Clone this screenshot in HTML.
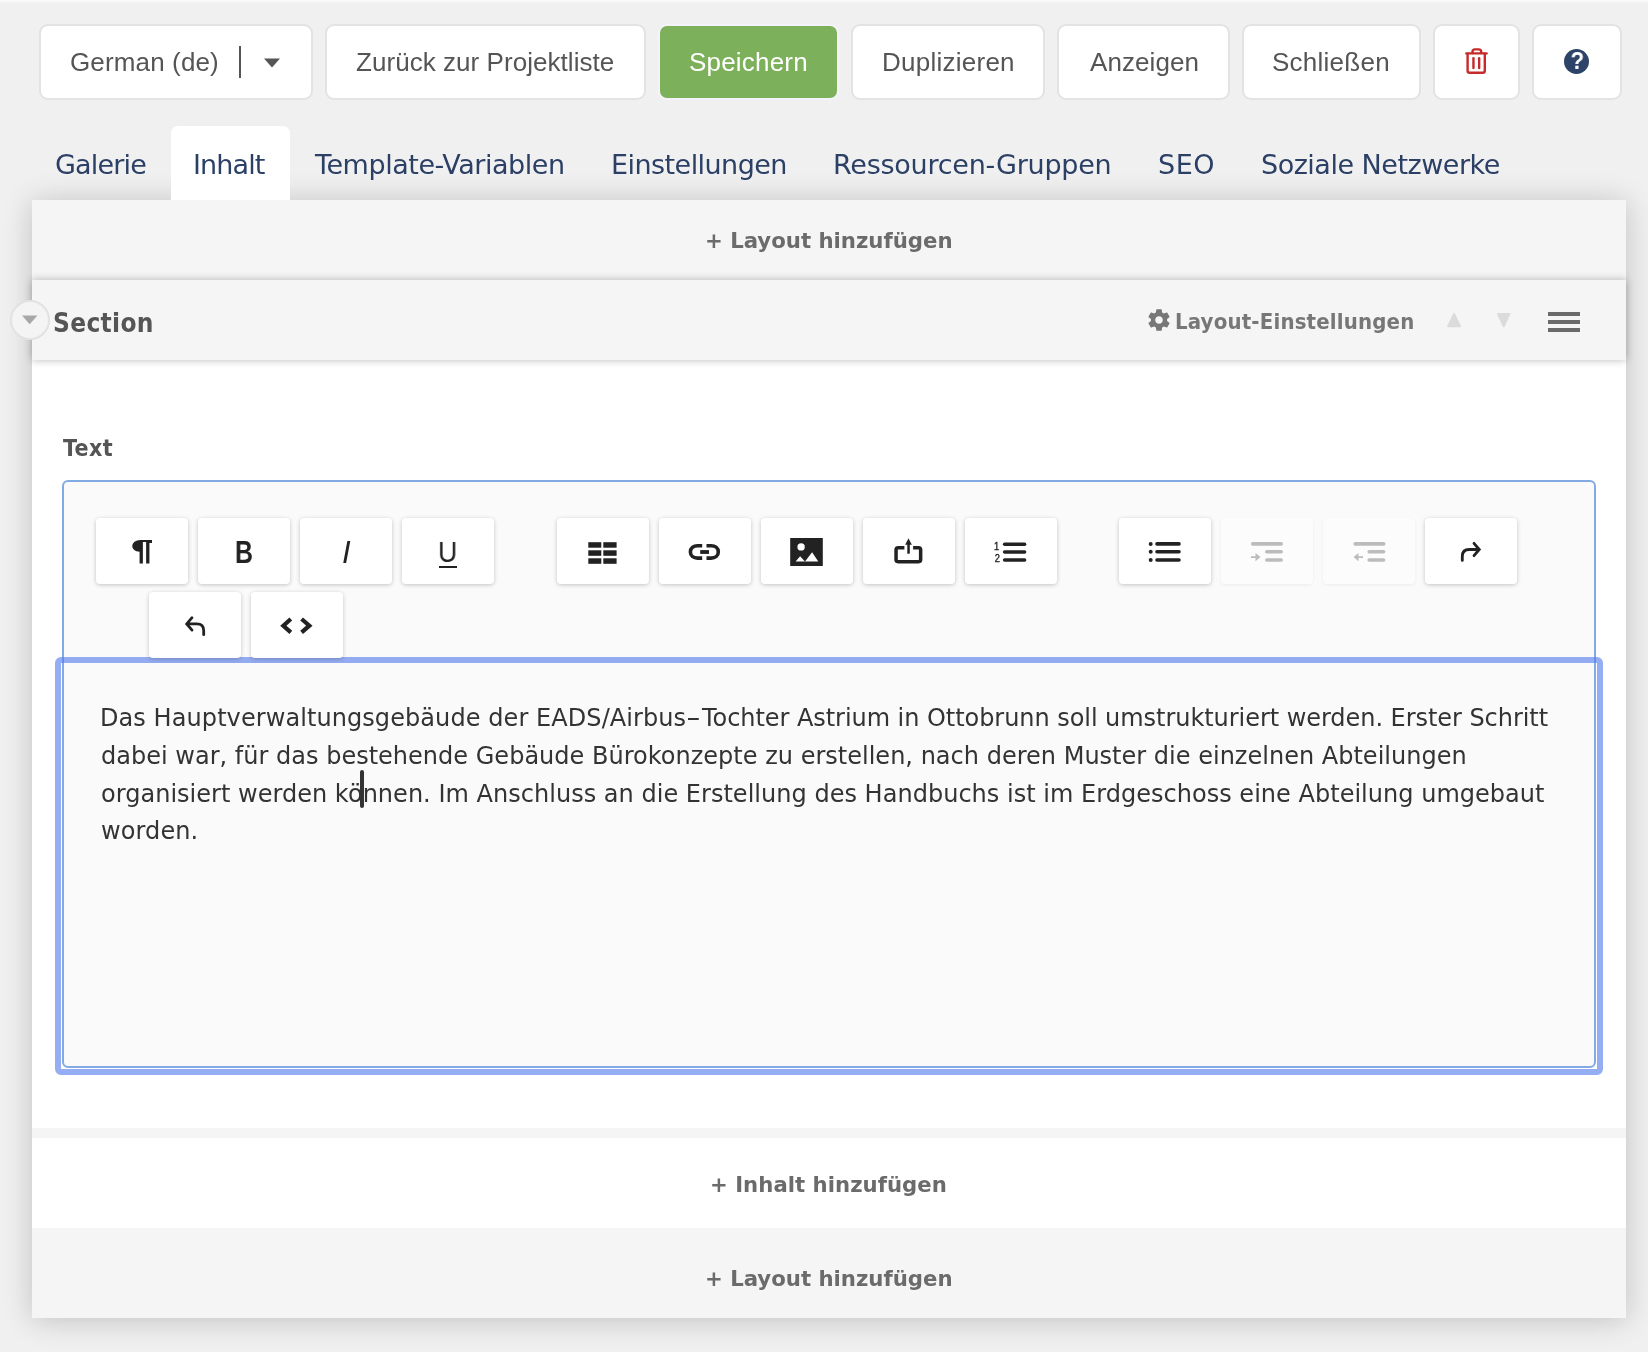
<!DOCTYPE html>
<html lang="de">
<head>
<meta charset="utf-8">
<title>Projekt bearbeiten</title>
<style>
*{box-sizing:border-box;margin:0;padding:0}
html,body{width:1648px;height:1352px;overflow:hidden}
body{background:#f0f0f0;font-family:"Liberation Sans",sans-serif;position:relative;color:#555}
.abs{position:absolute}
.t{position:absolute;white-space:nowrap;line-height:1;will-change:transform}
/* top strip */
#strip{left:0;top:0;width:1648px;height:3px;background:linear-gradient(#fafafa,#f8f8f8 50%,#f0f0f0)}
/* top buttons */
.btn{position:absolute;top:24px;height:76px;background:#fff;border:2px solid #e3e3e3;border-radius:9px}
.btn .t{color:#555;font-size:26px;top:23px}
#b-save{background:#7db05a;border-color:#f5f3f9}
#b-save .t{color:#fff}
/* tabs */
.tab{color:#2c4066;font-size:27px;top:151px;font-family:"DejaVu Sans","Liberation Sans",sans-serif}
#tab-active{left:171px;top:126px;width:119px;height:74px;background:#fff;border-radius:7px 7px 0 0}
/* panel */
#panel{left:32px;top:200px;width:1594px;height:1118px;background:#f5f5f5;box-shadow:0 2px 28px rgba(0,0,0,.2)}
.add{color:#6b6b6b;font-weight:bold;font-size:22px;font-family:"DejaVu Sans Condensed","DejaVu Sans","Liberation Sans",sans-serif}
#sechead{left:32px;top:280px;width:1594px;height:80px;background:#f5f5f5;box-shadow:0 0 8px rgba(0,0,0,.28)}
#white1{left:32px;top:360px;width:1594px;height:768px;background:#fff}
#white2{left:32px;top:1138px;width:1594px;height:90px;background:#fff}
#circle{left:10px;top:300px;width:40px;height:40px;border-radius:50%;background:#f4f4f4;border:2px solid #e2e2e2}
/* editor */
#editor{left:62px;top:480px;width:1534px;height:588px;border:2px solid #82abe6;border-radius:6px;background:#fafafa}
#ring{left:55px;top:657px;width:1548px;height:418px;border:6px solid rgba(84,123,236,.62);border-radius:6px}
.tb{position:absolute;width:92px;height:66px;background:#fff;border-radius:4px;box-shadow:0 1px 4px rgba(0,0,0,.22)}
.tb.dis{background:#fcfcfc;box-shadow:0 1px 3px rgba(0,0,0,.06)}
.tb svg{position:absolute;left:0;top:0}
.gl{color:#222}
.bc{font-weight:bold;font-family:"DejaVu Sans Condensed","DejaVu Sans","Liberation Sans",sans-serif}
.body{color:#333;font-size:24px;font-family:"DejaVu Sans","Liberation Sans",sans-serif}
</style>
</head>
<body>
<div id="strip" class="abs"></div>

<!-- TOPBAR -->
<div class="btn" id="b-lang" style="left:39px;width:274px"><span class="t" style="left:29.2px;letter-spacing:0.14px">German (de)</span>
<div class="abs" style="left:198px;top:20px;width:2px;height:32px;background:#555"></div>
<svg class="abs" style="left:222px;top:32.4px" width="18" height="10" viewBox="0 0 18 10"><path d="M1 0.5h16L9 9.5z" fill="#555"/></svg></div>
<div class="btn" id="b-back" style="left:325px;width:321px"><span class="t" style="left:28.9px;letter-spacing:0.051px">Zurück zur Projektliste</span></div>
<div class="btn" id="b-save" style="left:658px;width:181px"><span class="t" style="left:29.0px;letter-spacing:0.2px">Speichern</span></div>
<div class="btn" id="b-dup" style="left:851px;width:194px"><span class="t" style="left:29.0px;letter-spacing:0.25px">Duplizieren</span></div>
<div class="btn" id="b-show" style="left:1057px;width:173px"><span class="t" style="left:30.5px;letter-spacing:0.071px">Anzeigen</span></div>
<div class="btn" id="b-close" style="left:1242px;width:179px"><span class="t" style="left:28.0px;letter-spacing:0.25px">Schließen</span></div>
<div class="btn" id="b-trash" style="left:1433px;width:87px"><svg class="abs" style="left:1px;top:1px" width="81" height="70" viewBox="0 0 81 70"><g fill="none" stroke="#c62a2a" stroke-width="2.4" stroke-linecap="round" stroke-linejoin="round"><path d="M30.4 26.4h20.2"/><path d="M36.5 26v-1.200q0-2.400 2.400-2.400h3.900q2.400 0 2.400 2.400v1.200"/><path d="M31.600 27v16.800q0 2 2 2h13.200q2 0 2-2v-16.800"/><path d="M37.450 31.200v9.800"/><path d="M43.150 31.200v9.800"/></g></svg></div>
<div class="btn" id="b-help" style="left:1532px;width:90px"><div class="abs" style="left:30px;top:23px;width:25px;height:25px;border-radius:50%;background:#2d4468"></div><span class="t" style="left:35.5px;top:22.5px;font-size:24px;font-weight:bold;color:#fff;transform:scaleX(.92);transform-origin:50% 50%">?</span></div>

<!-- PANEL -->
<div id="panel" class="abs"></div>
<div id="tab-active" class="abs"></div>
<!-- TABS -->
<span class="t tab" style="left:55.1px;letter-spacing:-0.816px">Galerie</span>
<span class="t tab" style="left:193.4px;letter-spacing:-0.88px">Inhalt</span>
<span class="t tab" style="left:315.4px;letter-spacing:-0.453px">Template-Variablen</span>
<span class="t tab" style="left:611.2px;letter-spacing:-0.55px">Einstellungen</span>
<span class="t tab" style="left:832.9px;letter-spacing:-0.248px">Ressourcen-Gruppen</span>
<span class="t tab" style="left:1157.6px;letter-spacing:0.55px">SEO</span>
<span class="t tab" style="left:1260.9px;letter-spacing:-0.494px">Soziale Netzwerke</span>
<div id="white1" class="abs"></div>
<div id="white2" class="abs"></div>
<div id="sechead" class="abs"></div>
<span class="t add" style="left:704.6px;top:229.6px;letter-spacing:-0.011px;transform:scaleX(1.074);transform-origin:0 0">+ Layout hinzufügen</span>
<span class="t add" style="left:709.5px;top:1173.5px;letter-spacing:0.028px;transform:scaleX(1.0714);transform-origin:0 0">+ Inhalt hinzufügen</span>
<span class="t add" style="left:704.6px;top:1267.8px;letter-spacing:-0.011px;transform:scaleX(1.074);transform-origin:0 0">+ Layout hinzufügen</span>

<div id="circle" class="abs"></div>
<svg class="abs" style="left:10px;top:300px" width="40" height="40"><path d="M12 15.400h15.400l-7.700 8.800z" fill="#a8a8a8"/></svg>
<svg class="abs" id="gear" style="left:1145.6px;top:306.8px" width="26" height="26" viewBox="0 0 24 24"><path fill="#777" d="M19.430 12.980c.040-.320.070-.640.070-.980s-.030-.660-.070-.980l2.110-1.650c.190-.150.240-.420.120-.640l-2-3.460c-.120-.220-.390-.300-.610-.220l-2.490 1c-.520-.400-1.080-.730-1.690-.980l-.380-2.650A.488.488 0 0 0 14 2h-4c-.250 0-.460.180-.490.420l-.380 2.650c-.610.250-1.170.590-1.690.980l-2.490-1c-.230-.090-.490 0-.610.220l-2 3.460c-.130.220-.070.490.120.640l2.110 1.650c-.040.320-.070.650-.070.980s.030.660.070.980l-2.110 1.650c-.190.150-.240.420-.120.640l2 3.460c.120.220.390.300.610.220l2.490-1c.520.400 1.080.730 1.690.980l.380 2.650c.030.240.240.420.490.420h4c.250 0 .460-.180.490-.420l.380-2.650c.610-.250 1.170-.590 1.690-.980l2.490 1c.230.090.490 0 .610-.220l2-3.460c.120-.220.070-.490-.120-.640l-2.110-1.650zM12 15.500c-1.930 0-3.500-1.570-3.500-3.500s1.570-3.500 3.500-3.500 3.500 1.570 3.500 3.500-1.570 3.500-3.500 3.500z"/></svg>
<svg class="abs" style="left:1440px;top:306px" width="150" height="30"><g fill="#dbdbdb" stroke="#dbdbdb" stroke-width="2" stroke-linejoin="round"><path d="M14.1 7.9L20 20.3H8.2Z"/><path d="M57.9 7.9H69.4L63.65 20.3Z"/></g><g fill="#6a6a6a"><rect x="108" y="6" width="32" height="4"/><rect x="108" y="14" width="32" height="4"/><rect x="108" y="22" width="32" height="4"/></g></svg>
<span class="t bc" id="sectitle" style="left:52.9px;top:309.6px;font-size:26px;color:#555;letter-spacing:0.333px">Section</span>
<span class="t bc" id="layset" style="left:1174.8px;top:310.6px;font-size:22px;color:#777;letter-spacing:0.168px">Layout-Einstellungen</span>

<span class="t bc" id="lbl-text" style="left:63.0px;top:437px;font-size:23px;color:#555;letter-spacing:0.467px">Text</span>

<!-- EDITOR -->
<div id="editor" class="abs"></div>
<div id="ring" class="abs"></div>

<!-- TOOLBAR -->
<div class="tb" style="left:96px;top:518px"><span class="t gl" style="left:34.3px;top:19.0px;font-size:29.0px;font-weight:bold;font-family:'DejaVu Sans','Liberation Sans',sans-serif;transform:scaleX(1.22);transform-origin:0 0">¶</span><div class="abs" style="left:52px;top:22px;width:4px;height:2.7px;background:#222"></div></div>
<div class="tb" style="left:198px;top:518px"><span class="t gl" style="left:36.5px;top:19.2px;font-size:31px;font-weight:bold;transform:scaleX(.8);transform-origin:0 0">B</span></div>
<div class="tb" style="left:300px;top:518px"><span class="t gl" style="left:42px;top:19.2px;font-size:31px;font-style:italic;">I</span></div>
<div class="tb" style="left:402px;top:518px"><span class="t gl" style="left:35.500px;top:19.5px;font-size:29px;transform:scaleX(.92);transform-origin:0 0">U</span><div class="abs" style="left:36.7px;top:47.9px;width:18.1px;height:2.2px;background:#222"></div></div>
<div class="tb" style="left:557px;top:518px"><svg width="92" height="66"><g fill="#222"><rect x="31.3" y="24.2" width="13" height="5.5"/><rect x="46.3" y="24.2" width="13.3" height="5.5"/><rect x="31.3" y="32.3" width="13" height="5.5"/><rect x="46.3" y="32.3" width="13.3" height="5.5"/><rect x="31.3" y="40.3" width="13" height="5.5"/><rect x="46.3" y="40.3" width="13.3" height="5.5"/></g></svg></div>
<div class="tb" style="left:659px;top:518px"><svg width="92" height="66"><g fill="none" stroke="#222" stroke-width="3.6"><path d="M43.2 27.7H38.6C34.4 27.7 31.4 30.2 31.4 33.9C31.4 37.6 34.4 40.1 38.6 40.1H43.2"/><path d="M47.5 27.7H52.1C56.3 27.7 59.3 30.2 59.3 33.9C59.3 37.6 56.3 40.1 52.1 40.1H47.5"/></g><rect x="41.2" y="32.1" width="8.8" height="3.8" fill="#222"/></svg></div>
<div class="tb" style="left:761px;top:518px"><svg width="92" height="66"><path fill-rule="evenodd" fill="#222" d="M29.200 20h32.600v28h-32.600z M36.400 28.900a3.700 3.700 0 1 0 7.400 0a3.700 3.700 0 1 0 -7.400 0z M34.600 43.500l4.500-5.300l4.900 5.300z M44 43.500l7.100-9.200l6.200 9.200z"/></svg></div>
<div class="tb" style="left:863px;top:518px"><svg width="92" height="66"><path d="M41.4 29.65h-6.25q-2.1 0-2.1 2.1v9.8q0 2.1 2.1 2.1h20.4q2.1 0 2.1-2.1v-9.8q0-2.1-2.1-2.1h-5.45" fill="none" stroke="#222" stroke-width="3.5"/><rect x="44.3" y="26" width="2.5" height="9.7" fill="#222"/><path d="M45.5 20.2l3.3 6.5h-6.6z" fill="#222"/></svg></div>
<div class="tb" style="left:965px;top:518px"><svg width="92" height="66"><g stroke="#222" stroke-width="3.500" stroke-linecap="round"><path d="M39.600 26.200h20"/><path d="M39.600 34.100h20"/><path d="M39.600 42.100h20"/></g><text x="39.8" y="31.9" text-anchor="end" transform="scale(.86 1)" font-family="Liberation Sans, sans-serif" font-size="10.8" stroke="#222" stroke-width=".35" fill="#222">1</text><text x="40.7" y="44" text-anchor="end" transform="scale(.86 1)" font-family="Liberation Sans, sans-serif" font-size="10.8" stroke="#222" stroke-width=".35" fill="#222">2</text></svg></div>
<div class="tb" style="left:1119px;top:518px"><svg width="92" height="66"><g stroke="#222" stroke-width="3.600" stroke-linecap="round"><path d="M38 25.900h22"/><path d="M38 33.800h22"/><path d="M38 42h22"/></g><g fill="#222"><circle cx="31.700" cy="25.900" r="2"/><circle cx="31.700" cy="33.800" r="2"/><circle cx="31.700" cy="42" r="2"/></g></svg></div>
<div class="tb dis" style="left:1221px;top:518px"><svg width="92" height="66"><g stroke="#bcbcbc" stroke-width="3.600" stroke-linecap="round"><path d="M31.700 25.900h28.500"/><path d="M45.800 33.800h14.400"/><path d="M45.800 42h14.400"/></g><path d="M30 38.200h4.500v-3.200l5 4.100l-5 4.100v-3.200h-4.500z" fill="#bcbcbc"/></svg></div>
<div class="tb dis" style="left:1323px;top:518px"><svg width="92" height="66"><g stroke="#bcbcbc" stroke-width="3.600" stroke-linecap="round"><path d="M32.200 25.900h28.500"/><path d="M46.200 33.800h14.400"/><path d="M46.200 42h14.400"/></g><path d="M40 38.200h-4.500v-3.200l-5 4.100l5 4.100v-3.200h4.500z" fill="#bcbcbc"/></svg></div>
<div class="tb" style="left:1425px;top:518px"><svg width="92" height="66"><path d="M37.3 42.4V38.4Q37.3 31.5 44.2 31.5H54M49 25.3L54.3 31.5L49 37.7" fill="none" stroke="#222" stroke-width="2.8" stroke-linecap="round" stroke-linejoin="miter"/></svg></div>
<div class="tb" style="left:149px;top:592px"><svg width="92" height="66"><path d="M54.7 42.7V38.7Q54.7 31.9 47.8 31.9H38M43 25.7L37.7 31.9L43 38.1" fill="none" stroke="#222" stroke-width="2.8" stroke-linecap="round" stroke-linejoin="miter"/></svg></div>
<div class="tb" style="left:251px;top:592px"><svg width="92" height="66"><path d="M39.8 27L32.35 33.7L39.8 40.4M50.6 27L58.35 33.7L50.6 40.4" fill="none" stroke="#222" stroke-width="4.2" stroke-linejoin="miter"/></svg></div>
<span class="t body" style="left:100.0px;top:705.6px;letter-spacing:0.076px">Das Hauptverwaltungsgebäude der EADS/Airbus<span style="display:inline-block;transform:scaleX(1.7);transform-origin:0 50%">-</span></span><span class="t body" style="left:701.8px;top:705.6px;letter-spacing:-0.051px">Tochter Astrium in Ottobrunn soll umstrukturiert werden. Erster Schritt</span>
<span class="t body" style="left:100.5px;top:743.6px;letter-spacing:0.011px">dabei war, für das bestehende Gebäude Bürokonzepte zu erstellen, nach deren Muster die einzelnen Abteilungen</span>
<span class="t body" style="left:100.5px;top:781.5px;letter-spacing:0.021px">organisiert werden können. Im Anschluss an die Erstellung des Handbuchs ist im Erdgeschoss eine Abteilung umgebaut</span>
<span class="t body" style="left:100.6px;top:819.4px;letter-spacing:0.1px">worden.</span>
<div class="abs" id="caret" style="left:360px;top:770px;width:4px;height:38px;border-radius:2px;background:#333"></div>
</body>
</html>
